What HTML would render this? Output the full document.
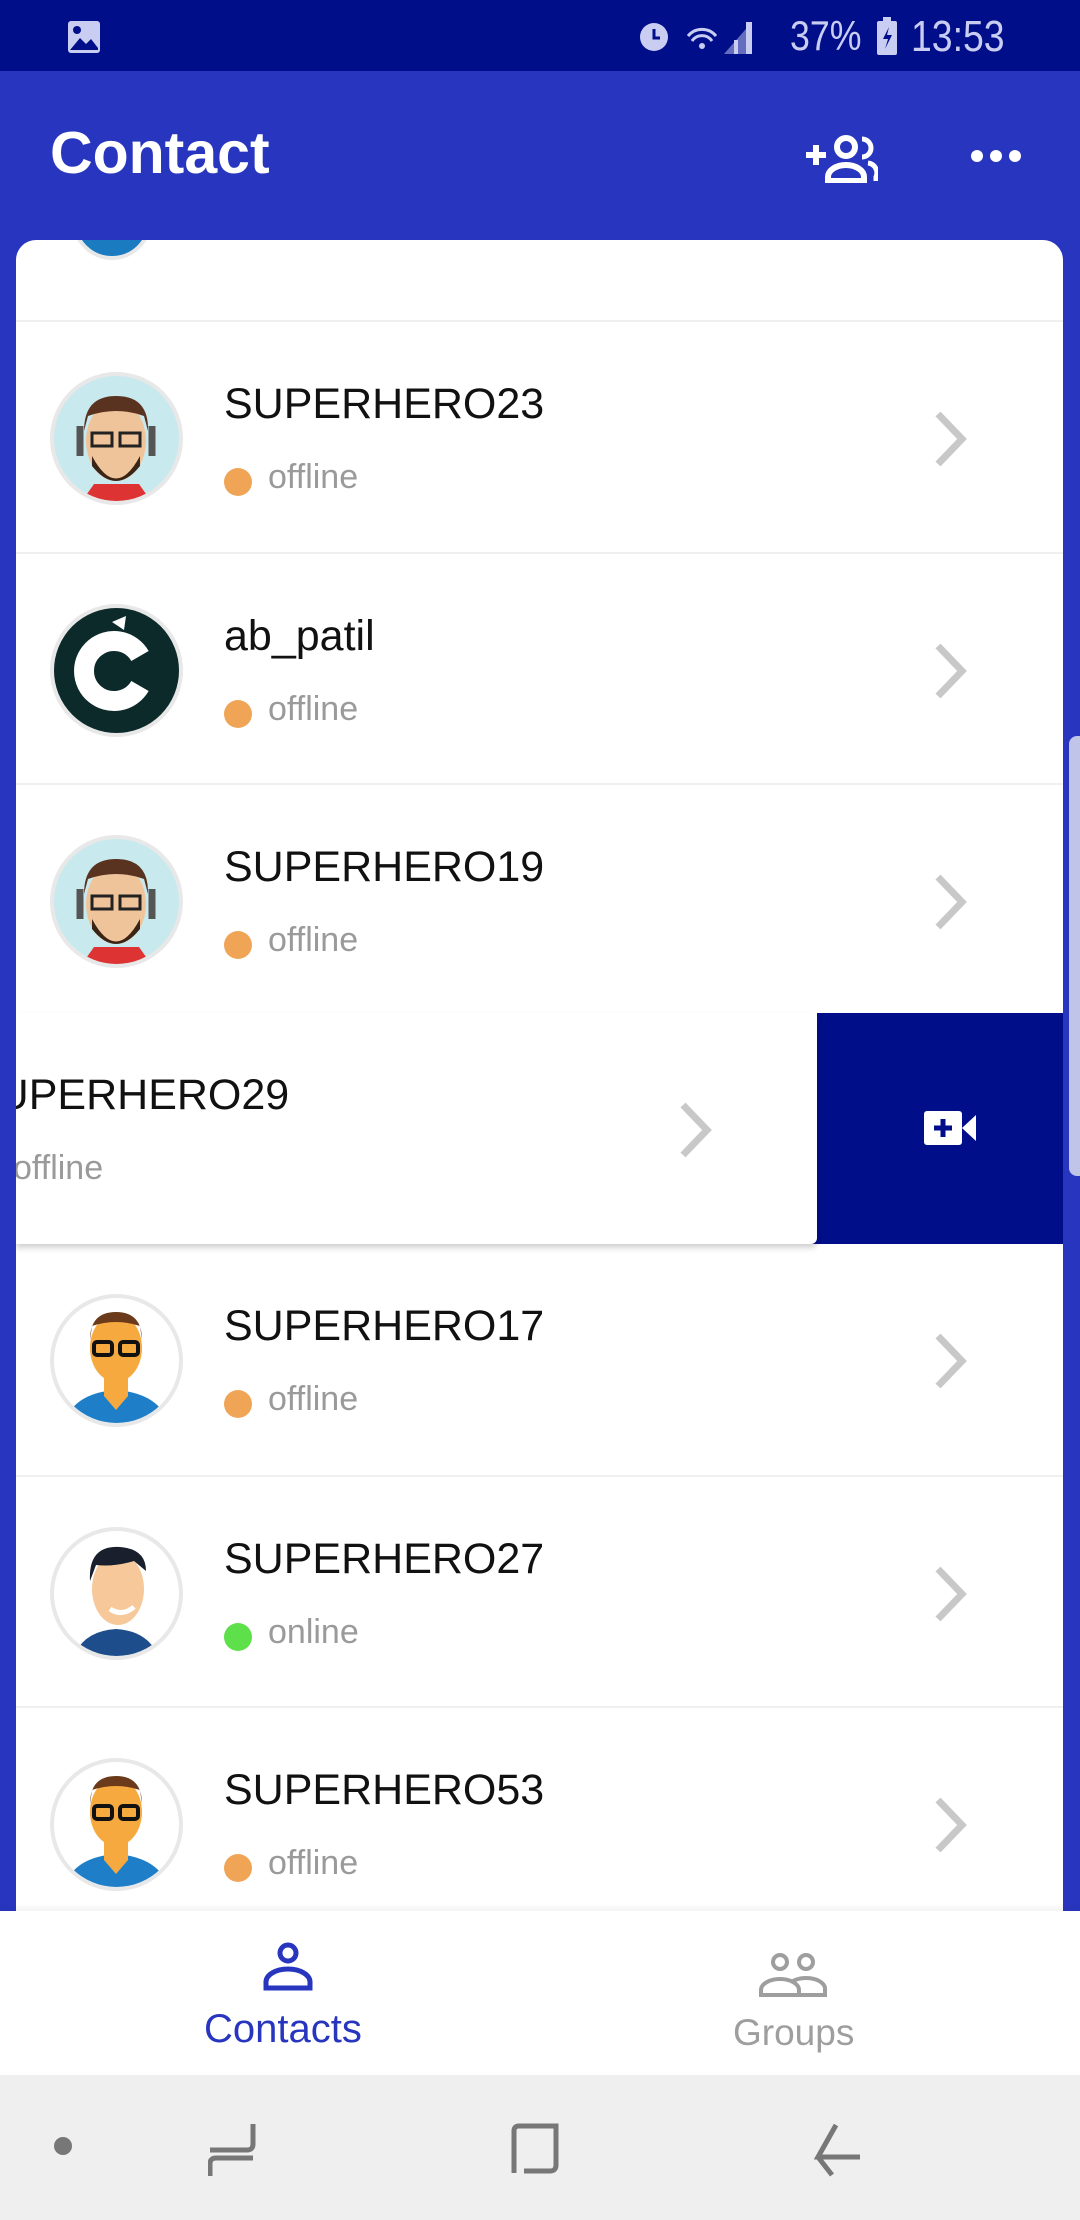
<!DOCTYPE html>
<html><head><meta charset="utf-8"><style>
*{margin:0;padding:0;box-sizing:border-box}
body{width:1080px;height:2220px;overflow:hidden;background:#2836bf;font-family:"Liberation Sans",sans-serif;position:relative}
.status{position:absolute;left:0;top:0;width:1080px;height:71px;background:#000e8a;color:#c9cdf2}
.appbar{position:absolute;top:71px;left:0;width:1080px;height:169px;background:#2836bf}
.title{position:absolute;left:50px;top:48px;color:#fff;font-size:59px;font-weight:bold;letter-spacing:0px}
.card{position:absolute;left:16px;top:240px;width:1047px;height:1700px;background:#fff;border-radius:20px 20px 0 0;overflow:hidden}
.row{position:absolute;left:0;width:1047px;height:231px;border-top:2px solid #f0f0f0}
.av{position:absolute;left:34px;top:50px;width:133px;height:133px;border-radius:50%;border:4px solid #e8e8e8;overflow:hidden}
.name{position:absolute;left:208px;top:58px;font-size:43px;color:#111}
.dot{position:absolute;left:208px;top:146px;width:28px;height:28px;border-radius:50%;background:#f0a556}
.st{position:absolute;left:252px;top:136px;font-size:34px;color:#9a9a9a}
.chev{position:absolute;left:914px;top:88px}
.nav{position:absolute;left:0;top:1911px;width:1080px;height:164px;background:#fff;box-shadow:0 -3px 6px rgba(0,0,0,.06)}
.sys{position:absolute;left:0;top:2075px;width:1080px;height:145px;background:#efefef}
</style></head><body>
<div class="status">
<svg style="position:absolute;left:67px;top:20px" width="34" height="34" viewBox="0 0 34 34"><rect x="1" y="1" width="32" height="32" rx="3" fill="#c9cdf2"/><circle cx="10" cy="10" r="4" fill="#000e8a"/><path d="M3 30 L13 18 L19 24 L24 19 L31 28 L31 30Z" fill="#000e8a"/></svg>
<svg style="position:absolute;left:636px;top:16px" width="120" height="40" viewBox="0 0 120 40"><circle cx="18" cy="21" r="14" fill="#c9cdf2"/><path d="M18 13v9h6" stroke="#000e8a" stroke-width="3" fill="none"/><path d="M52 20 a18 18 0 0 1 28 0 M56 25 a12 12 0 0 1 20 0" stroke="#c9cdf2" stroke-width="3" fill="none"/><circle cx="66" cy="30" r="3" fill="#c9cdf2"/><path d="M88 38 L116 6 L116 38Z" fill="#c9cdf2" opacity=".5"/><rect x="98" y="24" width="4" height="14" fill="#c9cdf2"/><rect x="110" y="6" width="6" height="32" fill="#c9cdf2"/></svg>
<div style="position:absolute;left:790px;top:12px;font-size:42px;transform:scaleX(.85);transform-origin:left">37%</div>
<svg style="position:absolute;left:876px;top:17px" width="22" height="38"><rect x="1" y="4" width="20" height="34" rx="2" fill="#c9cdf2"/><rect x="7" y="0" width="8" height="5" fill="#c9cdf2"/><path d="M13 10 L7 22 L12 22 L9 32 L16 18 L11 18Z" fill="#000e8a"/></svg>
<div style="position:absolute;left:911px;top:12px;font-size:44px;transform:scaleX(.85);transform-origin:left">13:53</div>
</div>
<div class="appbar">
<div class="title">Contact</div>
<svg style="position:absolute;left:804px;top:62px" width="74" height="50" viewBox="0 0 74 50"><path d="M2 22h20M12 12v20" stroke="#fff" stroke-width="6"/><circle cx="42" cy="14" r="9" fill="none" stroke="#fff" stroke-width="6"/><path d="M24 48 v-4 a18 12 0 0 1 36 0 v4Z" fill="none" stroke="#fff" stroke-width="6"/><path d="M58 6 a9 9 0 0 1 0 18 M64 30 a10 10 0 0 1 8 14 v4" stroke="#fff" stroke-width="5" fill="none"/></svg>
<svg style="position:absolute;left:970px;top:78px" width="52" height="14"><circle cx="7" cy="7" r="6" fill="#fff"/><circle cx="26" cy="7" r="6" fill="#fff"/><circle cx="45" cy="7" r="6" fill="#fff"/></svg>
</div>
<div class="card">
<div style="position:absolute;left:56px;top:-60px;width:80px;height:80px;border-radius:50%;border:4px solid #e8e8e8;background:#1a7bc0"></div>
<div class="row" style="top:80px">
<div class="av" style="background:#c8eaef"><svg width="125" height="125" viewBox="0 0 125 125"><path d="M28 125 L40 108 L85 108 L97 125Z" fill="#d33"/><ellipse cx="62" cy="65" rx="30" ry="40" fill="#f0c49a"/><path d="M30 55 Q30 20 62 20 Q95 20 94 55 L90 40 Q62 30 34 40Z" fill="#5a3320"/><path d="M38 80 Q62 125 86 80 L86 90 Q62 120 38 90Z" fill="#3a2416"/><rect x="38" y="57" width="20" height="13" fill="none" stroke="#222" stroke-width="3"/><rect x="66" y="57" width="20" height="13" fill="none" stroke="#222" stroke-width="3"/><path d="M26 50 v30 M98 50 v30" stroke="#555" stroke-width="7"/></svg></div>
<div class="name">SUPERHERO23</div><div class="dot"></div><div class="st">offline</div>
<svg class="chev" width="40" height="58"><path d="M8 4 L32 29 L8 54" stroke="#c8c8c8" stroke-width="7" fill="none"/></svg>
</div>
<div class="row" style="top:312px">
<div class="av" style="background:#0d2a2a"><svg width="125" height="125" viewBox="0 0 125 125"><path d="M86 48 A30 30 0 1 0 86 78" stroke="#fff" stroke-width="20" fill="none"/><path d="M58 14 l14 -6 l-2 14Z" fill="#fff"/></svg></div>
<div class="name">ab_patil</div><div class="dot"></div><div class="st">offline</div>
<svg class="chev" width="40" height="58"><path d="M8 4 L32 29 L8 54" stroke="#c8c8c8" stroke-width="7" fill="none"/></svg>
</div>
<div class="row" style="top:543px">
<div class="av" style="background:#c8eaef"><svg width="125" height="125" viewBox="0 0 125 125"><path d="M28 125 L40 108 L85 108 L97 125Z" fill="#d33"/><ellipse cx="62" cy="65" rx="30" ry="40" fill="#f0c49a"/><path d="M30 55 Q30 20 62 20 Q95 20 94 55 L90 40 Q62 30 34 40Z" fill="#5a3320"/><path d="M38 80 Q62 125 86 80 L86 90 Q62 120 38 90Z" fill="#3a2416"/><rect x="38" y="57" width="20" height="13" fill="none" stroke="#222" stroke-width="3"/><rect x="66" y="57" width="20" height="13" fill="none" stroke="#222" stroke-width="3"/><path d="M26 50 v30 M98 50 v30" stroke="#555" stroke-width="7"/></svg></div>
<div class="name">SUPERHERO19</div><div class="dot"></div><div class="st">offline</div>
<svg class="chev" width="40" height="58"><path d="M8 4 L32 29 L8 54" stroke="#c8c8c8" stroke-width="7" fill="none"/></svg>
</div>
<div style="position:absolute;left:0;top:773px;width:1047px;height:231px;background:#000e8a">
<svg style="position:absolute;left:906px;top:96px" width="56" height="38" viewBox="0 0 56 38"><rect x="2" y="2" width="38" height="34" rx="3" fill="#fff"/><path d="M40 19 L54 6 L54 32Z" fill="#fff"/><path d="M21 10 v18 M12 19 h18" stroke="#000e8a" stroke-width="5"/></svg>
<div style="position:absolute;left:0;top:0;width:801px;height:231px;background:#fff;border-radius:0 0 6px 0;box-shadow:0 4px 6px rgba(0,0,0,.18);overflow:hidden">
<div class="name" style="left:-47px">SUPERHERO29</div><div class="dot" style="left:-47px"></div><div class="st" style="left:-3px">offline</div>
<svg class="chev" style="left:659px" width="40" height="58"><path d="M8 4 L32 29 L8 54" stroke="#c8c8c8" stroke-width="7" fill="none"/></svg>
</div></div>
<div class="row" style="top:1004px;border-top:none">
<div class="av" style="background:#fff"><svg width="125" height="125" viewBox="0 0 125 125"><path d="M10 125 Q20 95 62 92 Q104 95 115 125Z" fill="#1e7fc8"/><path d="M50 80 L50 98 L62 112 L74 98 L74 80Z" fill="#f5a93e"/><ellipse cx="62" cy="50" rx="26" ry="34" fill="#f5a93e"/><path d="M36 42 Q36 14 62 14 Q88 14 88 42 L86 28 Q62 20 38 28Z" fill="#6b3a1a"/><rect x="40" y="44" width="18" height="13" rx="3" fill="none" stroke="#111" stroke-width="4"/><rect x="66" y="44" width="18" height="13" rx="3" fill="none" stroke="#111" stroke-width="4"/></svg></div>
<div class="name">SUPERHERO17</div><div class="dot"></div><div class="st">offline</div>
<svg class="chev" width="40" height="58"><path d="M8 4 L32 29 L8 54" stroke="#c8c8c8" stroke-width="7" fill="none"/></svg>
</div>
<div class="row" style="top:1235px">
<div class="av" style="background:#fff"><svg width="125" height="125" viewBox="0 0 125 125"><path d="M20 125 Q30 100 62 98 Q94 100 104 125Z" fill="#1d4d8a"/><ellipse cx="64" cy="58" rx="26" ry="36" fill="#f6c89a"/><path d="M36 50 Q34 14 66 16 Q92 18 92 40 L80 30 Q60 36 42 34Z" fill="#1a1f2e"/><path d="M56 78 Q68 86 80 76" stroke="#fff" stroke-width="5" fill="none"/></svg></div>
<div class="name">SUPERHERO27</div><div class="dot" style="background:#5ee04a"></div><div class="st">online</div>
<svg class="chev" width="40" height="58"><path d="M8 4 L32 29 L8 54" stroke="#c8c8c8" stroke-width="7" fill="none"/></svg>
</div>
<div class="row" style="top:1466px">
<div class="av" style="background:#fff"><svg width="125" height="125" viewBox="0 0 125 125"><path d="M10 125 Q20 95 62 92 Q104 95 115 125Z" fill="#1e7fc8"/><path d="M50 80 L50 98 L62 112 L74 98 L74 80Z" fill="#f5a93e"/><ellipse cx="62" cy="50" rx="26" ry="34" fill="#f5a93e"/><path d="M36 42 Q36 14 62 14 Q88 14 88 42 L86 28 Q62 20 38 28Z" fill="#6b3a1a"/><rect x="40" y="44" width="18" height="13" rx="3" fill="none" stroke="#111" stroke-width="4"/><rect x="66" y="44" width="18" height="13" rx="3" fill="none" stroke="#111" stroke-width="4"/></svg></div>
<div class="name">SUPERHERO53</div><div class="dot"></div><div class="st">offline</div>
<svg class="chev" width="40" height="58"><path d="M8 4 L32 29 L8 54" stroke="#c8c8c8" stroke-width="7" fill="none"/></svg>
</div>
</div>
<div style="position:absolute;left:1069px;top:736px;width:11px;height:440px;background:#c0c4e8;border-radius:8px 0 0 8px"></div>
<div class="nav">
<svg style="position:absolute;left:263px;top:30px" width="50" height="50" viewBox="0 0 50 50"><circle cx="25" cy="12" r="8" fill="none" stroke="#2836bf" stroke-width="5"/><path d="M3 47 v-6 a22 13 0 0 1 44 0 v6Z" fill="none" stroke="#2836bf" stroke-width="5"/></svg>
<div style="position:absolute;left:204px;top:96px;font-size:40px;color:#2836bf">Contacts</div>
<svg style="position:absolute;left:758px;top:40px" width="70" height="46" viewBox="0 0 70 46"><circle cx="22" cy="11" r="7" fill="none" stroke="#9e9e9e" stroke-width="4"/><circle cx="48" cy="11" r="7" fill="none" stroke="#9e9e9e" stroke-width="4"/><path d="M3 44 v-5 a19 11 0 0 1 38 0 v5Z M35 30 a19 11 0 0 1 32 9 v5 H41" fill="none" stroke="#9e9e9e" stroke-width="4"/></svg>
<div style="position:absolute;left:733px;top:101px;font-size:37px;color:#9e9e9e">Groups</div>
</div>
<div class="sys">
<div style="position:absolute;left:54px;top:62px;width:18px;height:18px;border-radius:50%;background:#777"></div>
<svg style="position:absolute;left:208px;top:47px" width="50" height="56"><path d="M45 2 V22 Q45 28 39 28 H2 M2 54 V42 Q2 36 8 36 H45" stroke="#777" stroke-width="5" fill="none"/></svg>
<svg style="position:absolute;left:510px;top:48px" width="50" height="52"><path d="M4 50 V8 Q4 3 9 3 H46 V42 Q46 48 40 48 H14" stroke="#777" stroke-width="5" fill="none"/></svg>
<svg style="position:absolute;left:814px;top:48px" width="50" height="54"><path d="M22 2 L4 34 H46 M4 34 L18 52" stroke="#777" stroke-width="5" fill="none"/></svg>
</div>
</body></html>
